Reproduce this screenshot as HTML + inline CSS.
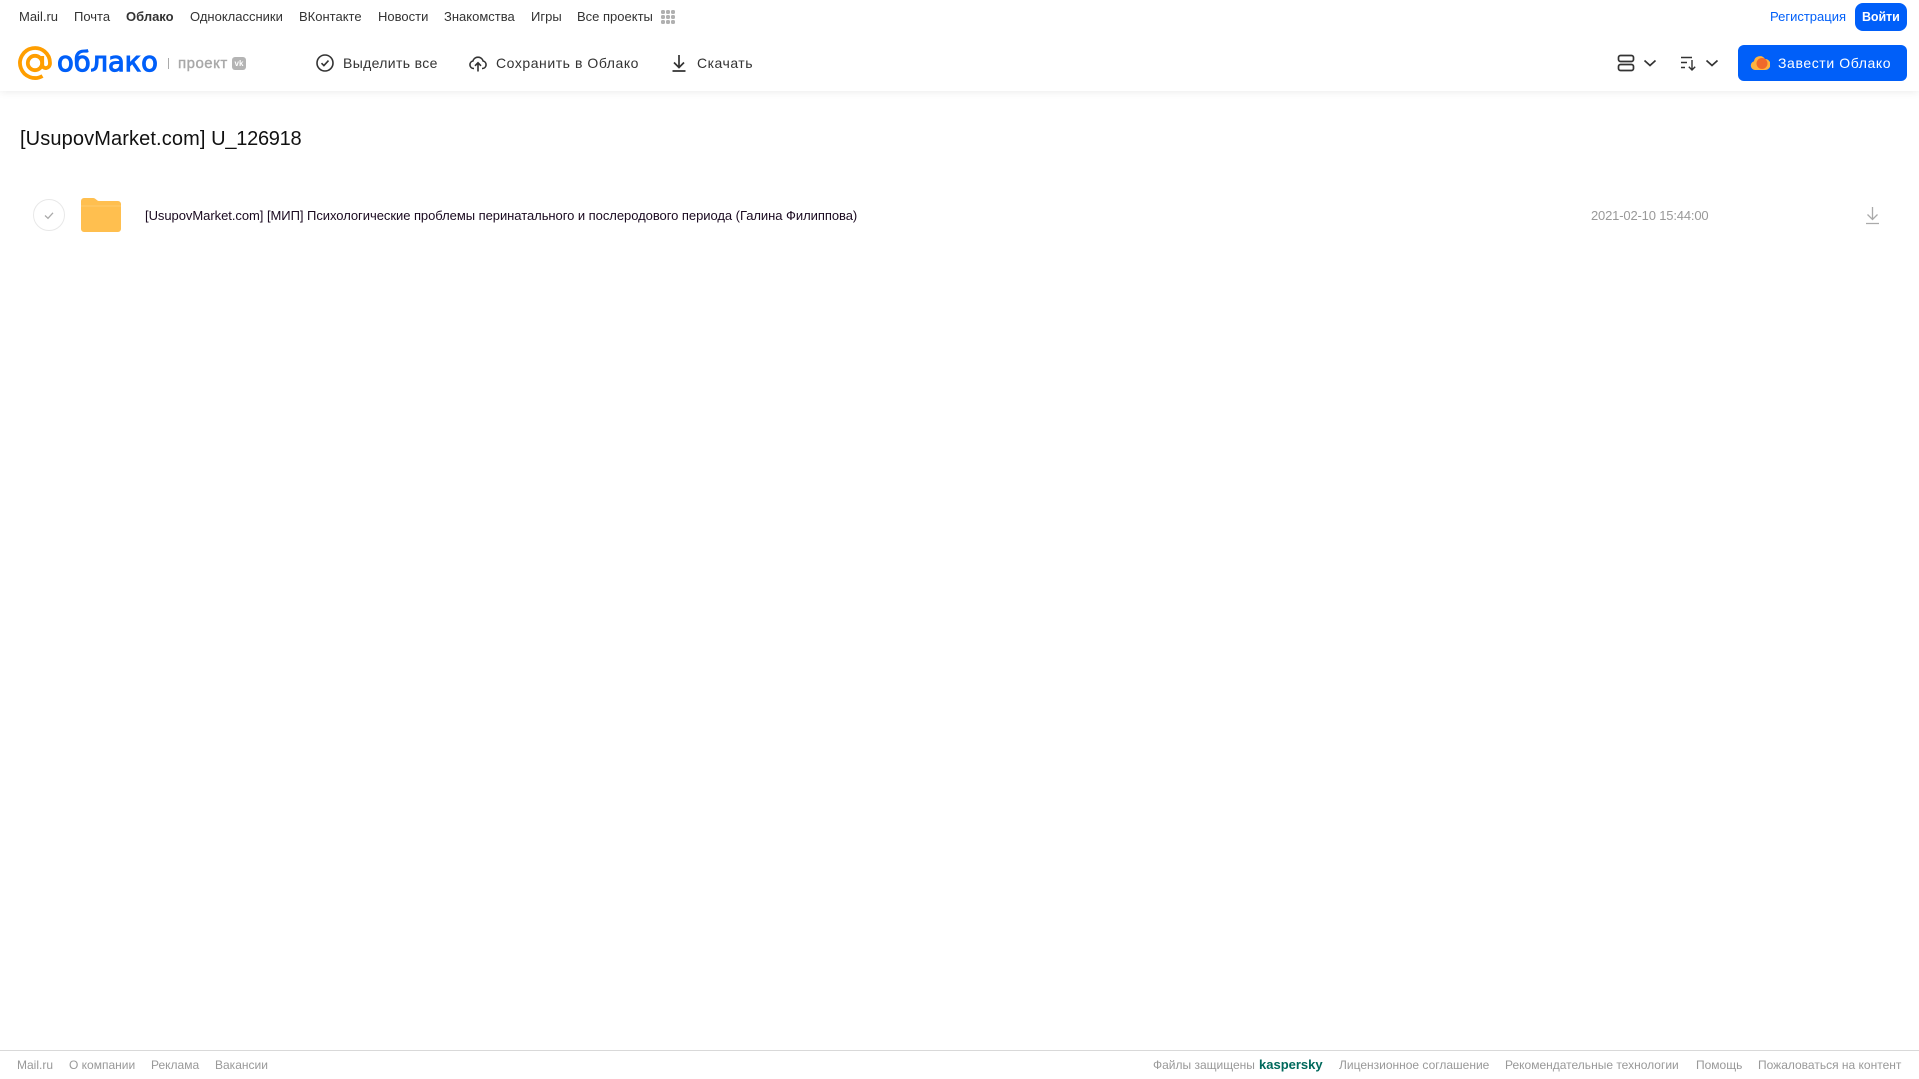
<!DOCTYPE html>
<html lang="ru"><head><meta charset="utf-8"><title>Облако</title>
<style>
html,body{margin:0;padding:0;background:#fff;width:1919px;height:1079px;overflow:hidden;font-family:"Liberation Sans",sans-serif}
.t{position:absolute;white-space:nowrap;line-height:16px}
.n{font-size:13px;color:#333;top:9px}
.b{font-size:14px;color:#333;top:55px;letter-spacing:.35px}
.f{font-size:12px;color:#999;top:1057px}
svg{position:absolute;display:block}
#hd{position:absolute;left:0;top:0;width:1919px;height:91px;background:#fff;box-shadow:0 1px 8px rgba(0,0,0,.08)}
</style></head><body>
<div id="hd"></div>
<span class="t n" style="left:19px">Mail.ru</span>
<span class="t n" style="left:74px">Почта</span>
<span class="t n" style="left:126px;font-weight:bold">Облако</span>
<span class="t n" style="left:190px">Одноклассники</span>
<span class="t n" style="left:299px">ВКонтакте</span>
<span class="t n" style="left:378px">Новости</span>
<span class="t n" style="left:444px">Знакомства</span>
<span class="t n" style="left:531px">Игры</span>
<span class="t n" style="left:577px">Все проекты</span>
<svg style="left:660px;top:9px" width="16" height="16" fill="#b0b0b0"><rect x="1" y="1" width="4" height="4" rx="1.500"/><rect x="6" y="1" width="4" height="4" rx="1.500"/><rect x="11" y="1" width="4" height="4" rx="1.500"/><rect x="1" y="6" width="4" height="4" rx="1.500"/><rect x="6" y="6" width="4" height="4" rx="1.500"/><rect x="11" y="6" width="4" height="4" rx="1.500"/><rect x="1" y="11" width="4" height="4" rx="1.500"/><rect x="6" y="11" width="4" height="4" rx="1.500"/><rect x="11" y="11" width="4" height="4" rx="1.500"/></svg>
<span class="t n" style="left:1770px;color:#005ff9">Регистрация</span>
<div style="position:absolute;left:1855px;top:3px;width:52px;height:28px;border-radius:8px;background:#005ff9"></div>
<span class="t n" style="left:1862px;color:#fff;font-size:12.500px;font-weight:bold;letter-spacing:-.1px">Войти</span>

<svg style="left:18px;top:46px" width="35" height="34" fill="none" stroke="#ff9e00" stroke-width="3.800"><circle cx="17" cy="17" r="7.200"/><path d="M24.200 10v8.500c0 5 7.800 5 7.800-1.500A15 15 0 1 0 24.500 30"/></svg>
<span class="t" style="left:57px;top:44px;font-size:28px;line-height:36px;color:#005ff9;-webkit-text-stroke:1.100px #005ff9;font-family:'DejaVu Sans',sans-serif;letter-spacing:-.1px;transform-origin:0 50%;transform:scaleX(.98)">облако</span>
<div style="position:absolute;left:168px;top:58px;width:1px;height:11px;background:#aaa"></div>
<span class="t" style="left:178px;top:56px;font-size:15px;color:#a8a8a8;-webkit-text-stroke:.4px #a8a8a8;letter-spacing:.5px">проект</span>
<div style="position:absolute;left:232px;top:57px;width:14px;height:13px;border-radius:3px;background:#b4b4b4;color:#fff;font:bold 8px/13px 'Liberation Sans',sans-serif;text-align:center">vk</div>

<svg style="left:315px;top:53px" width="20" height="20" fill="none" stroke="#333" stroke-width="1.600"><circle cx="10" cy="10" r="8"/><path d="M6.500 10.200l2.400 2.400 4.600-5"/></svg>
<span class="t b" style="left:343px">Выделить все</span>
<svg style="left:468px;top:53px" width="20" height="20" fill="none" stroke="#333" stroke-width="1.600"><path d="M6 15.500H5.500a3.800 3.800 0 0 1-.6-7.500 5.300 5.300 0 0 1 10.200 0 3.800 3.800 0 0 1-.6 7.500H14"/><path d="M10 18.500V10M7 12.800l3-3 3 3"/></svg>
<span class="t b" style="left:496px;letter-spacing:.55px">Сохранить в Облако</span>
<svg style="left:669px;top:53px" width="20" height="20" fill="none" stroke="#333" stroke-width="1.700"><path d="M10 2v12M5 9.500l5 5 5-5M3.500 18h13"/></svg>
<span class="t b" style="left:697px;letter-spacing:.5px">Скачать</span>

<svg style="left:1617px;top:54px" width="18" height="18" fill="none" stroke="#333" stroke-width="1.700"><rect x="1.500" y="1.500" width="15" height="6" rx="2"/><rect x="1.500" y="10.500" width="15" height="6" rx="2"/></svg>
<svg style="left:1643px;top:58px" width="14" height="10" fill="none" stroke="#333" stroke-width="1.700"><path d="M1.500 2.500l5.500 5 5.500-5"/></svg>
<svg style="left:1680px;top:54px" width="18" height="18" fill="none" stroke="#333" stroke-width="1.400"><path d="M1 3.500h11M1 8.500h6M1 13.500h4M12 6v10M8.800 12.800l3.200 3.200 3.200-3.200"/></svg>
<svg style="left:1705px;top:58px" width="14" height="10" fill="none" stroke="#333" stroke-width="1.700"><path d="M1.500 2.500l5.500 5 5.500-5"/></svg>
<div style="position:absolute;left:1738px;top:45px;width:169px;height:36px;border-radius:6px;background:#005ff9"></div>
<svg style="left:1750px;top:53px" width="20" height="18"><path d="M5 17a4.500 4.500 0 0 1-1-8.800A6 6 0 0 1 15 6a5.500 5.500 0 0 1 0 11z" fill="#ffb33e"/><circle cx="12" cy="10.500" r="5.500" fill="#f0692a"/></svg>
<span class="t b" style="left:1778px;color:#fff;letter-spacing:.6px">Завести Облако</span>

<span class="t" style="left:20px;top:127px;font-size:20px;line-height:24px;color:#111"><span style="letter-spacing:.12px">[UsupovMarket.com]</span> <span style="letter-spacing:-.25px">U_126918</span></span>
<svg style="left:32px;top:198px" width="34" height="34" fill="none"><circle cx="17" cy="17" r="15.500" stroke="#e8e8e8"/><path d="M13 17.500l3 2.800 5-5.500" stroke="#aaa" stroke-width="1.300"/></svg>
<svg style="left:81px;top:198px" width="40" height="34"><path d="M0 3a3 3 0 0 1 3-3h9c3 0 3.500 3 6 3h19a3 3 0 0 1 3 3v25a3 3 0 0 1-3 3H3a3 3 0 0 1-3-3z" fill="#ffbf4f"/><path d="M0 8h40" stroke="#ffcb6e" stroke-width="1"/></svg>
<span class="t" style="left:145px;top:208px;font-size:13px;letter-spacing:-.046px;color:#1a0a20">[UsupovMarket.com] [МИП] Психологические проблемы перинатального и послеродового периода (Галина Филиппова)</span>
<span class="t" style="left:1591px;top:208px;font-size:13px;letter-spacing:-.17px;color:#999">2021-02-10 15:44:00</span>
<svg style="left:1865px;top:206px" width="15" height="19" fill="none" stroke="#aaa" stroke-width="1.300"><path d="M7.500 1v12M2.500 8.500l5 5 5-5M1 17.500h13"/></svg>

<div style="position:absolute;left:0;top:1050px;width:1919px;height:1px;background:#d9d9d9"></div>
<span class="t f" style="left:17px">Mail.ru</span>
<span class="t f" style="left:69px">О компании</span>
<span class="t f" style="left:151px">Реклама</span>
<span class="t f" style="left:215px">Вакансии</span>
<span class="t f" style="left:1153px">Файлы защищены</span>
<span class="t f" style="left:1259px;color:#00695c;font-weight:bold;font-size:13px">kaspersky</span>
<span class="t f" style="left:1339px">Лицензионное соглашение</span>
<span class="t f" style="left:1505px">Рекомендательные технологии</span>
<span class="t f" style="left:1696px">Помощь</span>
<span class="t f" style="left:1758px">Пожаловаться на контент</span>
</body></html>
